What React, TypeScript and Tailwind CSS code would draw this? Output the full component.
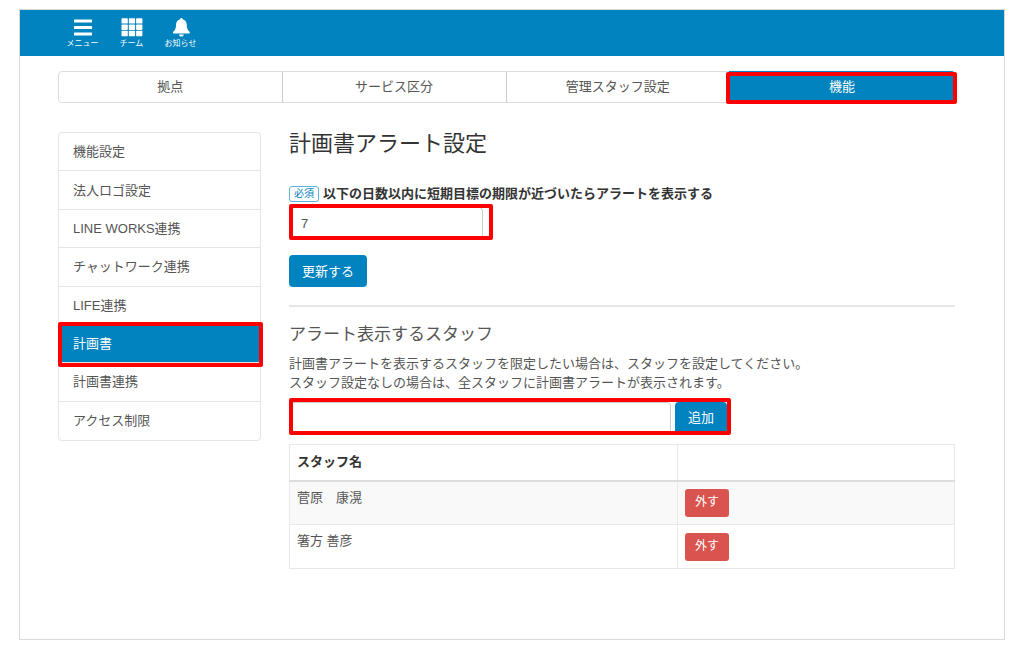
import { useState } from "react";

const tabs = ["拠点", "サービス区分", "管理スタッフ設定", "機能"];

const menuItems = [
  "機能設定",
  "法人ロゴ設定",
  "LINE WORKS連携",
  "チャットワーク連携",
  "LIFE連携",
  "計画書",
  "計画書連携",
  "アクセス制限",
];

function MenuIcon() {
  return (
    <svg viewBox="0 0 22 20" className="w-[22px] h-5" fill="currentColor">
      <rect x="2" y="2.5" width="18" height="3" rx="0.5" />
      <rect x="2" y="9" width="18" height="3" rx="0.5" />
      <rect x="2" y="15.5" width="18" height="3" rx="0.5" />
    </svg>
  );
}

function TeamIcon() {
  return (
    <svg viewBox="0 0 22 20" className="w-[22px] h-5" fill="currentColor">
      {[1.2, 7.5, 13.8].map((y) =>
        [0.5, 7.8, 15.1].map((x) => <rect key={`${x}-${y}`} x={x} y={y} width="6.3" height="5.4" rx="0.7" />)
      )}
    </svg>
  );
}

function BellIcon() {
  return (
    <svg viewBox="0 0 22 20" className="w-[22px] h-5" fill="currentColor">
      <path d="M11.4 1c0.7 0 1.2 0.5 1.2 1.3 2.5 0.6 3.9 2.5 4.1 5 0.2 4 0.8 5.9 2.9 7.4 0.5 0.5 0.2 1.9-0.6 1.9H3.8c-0.8 0-1.1-1.4-0.6-1.9 2.1-1.5 2.7-3.4 2.9-7.4 0.2-2.5 1.6-4.4 4.1-5 0-0.8 0.5-1.3 1.2-1.3z" />
      <path d="M9 17.4h4.8c-0.2 1.3-1.1 2.2-2.4 2.2s-2.2-0.9-2.4-2.2z" />
    </svg>
  );
}

const headerItems = [
  { label: "メニュー", icon: <MenuIcon /> },
  { label: "チーム", icon: <TeamIcon /> },
  { label: "お知らせ", icon: <BellIcon /> },
];

// 強調用の赤枠
function Highlight({ className }: { className: string }) {
  return <span aria-hidden="true" className={`absolute border-4 border-[#ff0000] rounded-xs pointer-events-none ${className}`} />;
}

export default function App() {
  const [days, setDays] = useState("7");
  const [staffName, setStaffName] = useState("");
  const [staffs, setStaffs] = useState(["菅原　康滉", "箸方 善彦"]);

  const addStaff = () => {
    if (!staffName) return;
    setStaffs([...staffs, staffName]);
    setStaffName("");
  };
  const removeStaff = (index: number) => {
    setStaffs(staffs.filter((_, i) => i !== index));
  };

  return (
    <div lang="ja" className="min-h-screen flex bg-white px-[19px] pt-[9px] pb-[11px] text-[13px] leading-[19px] text-[#555] font-['Liberation_Sans','Noto_Sans_CJK_JP',sans-serif]">
      <div className="flex-1 min-w-0 border border-[#d9d9d9]">
        <header className="flex items-center gap-4 h-[46px] pl-[46px] bg-[#0083be] text-white">
          {headerItems.map((item) => (
            <button key={item.label} type="button" className="w-[33px] flex flex-col items-center gap-px">
              {item.icon}
              <span className="text-[8px] leading-3 whitespace-nowrap">{item.label}</span>
            </button>
          ))}
        </header>

        <div className="pl-[38px] pr-[49px] pt-[15px]">
          <nav className="grid grid-cols-4 h-8 border border-[#ddd] rounded-sm">
            {tabs.map((tab, i) => (
              <a
                key={tab}
                href="#"
                className={`relative flex items-center justify-center pb-0.5 ${i === 3 ? "bg-[#0083be] text-white rounded-r-sm -m-px" : "border-r border-[#ccc]"}`}
              >
                {tab}
                {i === 3 && <Highlight className="-left-[3px] -right-[2px] top-px -bottom-px" />}
              </a>
            ))}
          </nav>

          <div className="flex gap-7 mt-[29px]">
            <ul className="shrink-0 w-[203px] h-[309px] grid auto-rows-fr border border-[#e5e5e5] rounded-sm divide-y divide-[#e5e5e5]">
              {menuItems.map((item) => (
                <li key={item} className={`relative ${item === "計画書" ? "bg-[#0083be] text-white" : ""}`}>
                  <a href="#" className="flex items-center h-full px-[14px]">{item}</a>
                  {item === "計画書" && <Highlight className="-left-px -right-[3px] -top-[3px] -bottom-[5px]" />}
                </li>
              ))}
            </ul>

            <main className="flex-1 min-w-0">
              <h1 className="text-[22px] leading-6 text-[#333]">計画書アラート設定</h1>

              {/* アラート日数 */}
              <label htmlFor="days" className="flex items-center gap-1 mt-7 font-bold text-[#333]">
                <span className="border border-[#5db3db] rounded-[3px] px-1 text-[10px] leading-[14px] font-normal text-[#0083be]">必須</span>
                以下の日数以内に短期目標の期限が近づいたらアラートを表示する
              </label>
              <div className="relative w-[204px] mt-1">
                <input
                  id="days"
                  type="text"
                  value={days}
                  onChange={(e) => setDays(e.target.value)}
                  className="block w-[194px] h-8 px-[11px] border border-[#ccc] rounded-sm focus:outline-none"
                />
                <Highlight className="inset-x-0 -top-[3px] -bottom-px" />
              </div>
              <button type="button" className="block mt-4 h-8 px-[13px] rounded-sm bg-[#0083be] text-white">更新する</button>

              <hr className="mt-[18px] border-t-2 border-[#e5e5e5]" />

              {/* 表示スタッフ */}
              <h2 id="staff-title" className="mt-4 text-[17px] leading-6">アラート表示するスタッフ</h2>
              <p className="mt-[7px]">
                計画書アラートを表示するスタッフを限定したい場合は、スタッフを設定してください。
                <br />
                スタッフ設定なしの場合は、全スタッフに計画書アラートが表示されます。
              </p>
              <div className="relative flex gap-1 w-[442px] mt-[10px] pr-1">
                <input
                  type="text"
                  aria-labelledby="staff-title"
                  value={staffName}
                  onChange={(e) => setStaffName(e.target.value)}
                  className="flex-1 min-w-0 h-8 px-[11px] border border-[#ccc] rounded-sm focus:outline-none"
                />
                <button type="button" onClick={addStaff} className="h-8 px-[13px] pb-0.5 rounded-sm bg-[#0083be] text-white">追加</button>
                <Highlight className="inset-x-0 -top-[4px] -bottom-px" />
              </div>

              <table className="w-full mt-[10px] table-fixed border-collapse border border-[#e8e8e8]">
                <thead>
                  <tr className="h-9 border-b-2 border-[#ddd]">
                    <th className="w-[388px] px-[7px] pb-0.5 text-left text-[#333] border-r border-[#e8e8e8]">スタッフ名</th>
                    <th></th>
                  </tr>
                </thead>
                <tbody>
                  {staffs.map((staff, i) => (
                    <tr key={i} className="h-11 border-b border-[#e8e8e8] odd:bg-[#f9f9f9]">
                      <td className="px-[7px] pt-[6px] align-top border-r border-[#e8e8e8]">{staff}</td>
                      <td className="px-[7px] align-middle">
                        <button type="button" onClick={() => removeStaff(i)} className="block h-7 px-[10px] rounded-[3px] bg-[#d9534f] text-white text-[12px]">外す</button>
                      </td>
                    </tr>
                  ))}
                </tbody>
              </table>
            </main>
          </div>
        </div>
      </div>
    </div>
  );
}
